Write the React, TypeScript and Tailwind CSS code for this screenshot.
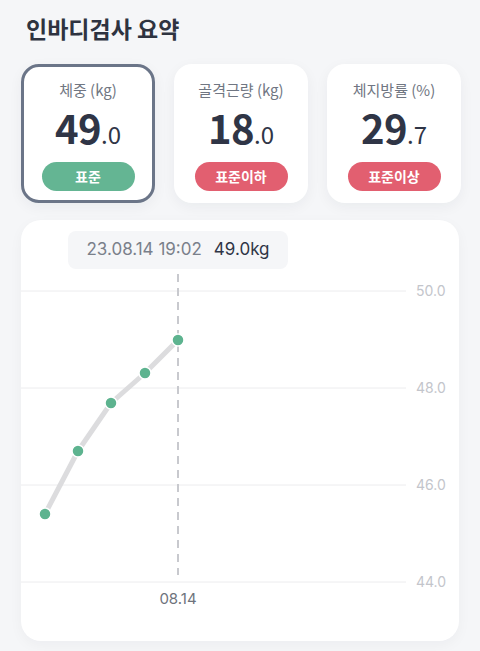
import React from "react";

const font = {
  fontFamily: '"Noto Sans CJK KR", "Noto Sans", sans-serif',
};

const latin = '"Inter", "Noto Sans", sans-serif';

type Stat = {
  label: string;
  whole: string;
  dec: string;
  badge: string;
  tone: "green" | "red";
  active?: boolean;
};

const stats: Stat[] = [
  { label: "체중 (kg)", whole: "49", dec: ".0", badge: "표준", tone: "green", active: true },
  { label: "골격근량 (kg)", whole: "18", dec: ".0", badge: "표준이하", tone: "red" },
  { label: "체지방률 (%)", whole: "29", dec: ".7", badge: "표준이상", tone: "red" },
];

const StatCard = ({ s }: { s: Stat }) => (
  <div
    className={
      "flex h-[139px] flex-col items-center rounded-[18px] bg-white shadow-[0_4px_14px_rgba(20,30,50,0.05)] " +
      (s.active ? "border-[3px] border-[#6b7588] pt-[13px]" : "pt-[16px]")
    }
  >
    <p className="text-[15px] leading-[20px] text-[#707682]">{s.label}</p>
    <p className="mt-[5px] flex items-baseline leading-[44px] text-[#2f3546]">
      <span className="text-[40px] font-semibold tracking-[-0.5px]">{s.whole}</span>
      <span className="text-[24px] font-normal">{s.dec}</span>
    </p>
    <div
      className={
        "mt-[6px] flex h-[29px] w-[93px] items-center justify-center rounded-full text-[14px] font-bold text-white " +
        (s.tone === "green" ? "bg-[#64b593]" : "bg-[#e25f70]")
      }
    >
      {s.badge}
    </div>
  </div>
);

const grid = [
  { y: 71, label: "50.0" },
  { y: 168, label: "48.0" },
  { y: 265, label: "46.0" },
  { y: 362, label: "44.0" },
];

const points = [
  [24, 294],
  [57, 231],
  [90, 183],
  [124, 153],
  [157, 120],
];

const Chart = () => (
  <div className="relative h-[421px] w-[438px] rounded-[20px] bg-white shadow-[0_4px_14px_rgba(20,30,50,0.04)]">
    <svg width="438" height="421" className="absolute left-0 top-0">
      {grid.map((g) => (
        <g key={g.label}>
          <line x1="0" x2="385" y1={g.y} y2={g.y} stroke="#ececee" strokeWidth="1" />
          <text x="395" y={g.y + 5} fontSize="14" fill="#c3c5cb" fontFamily={latin}>
            {g.label}
          </text>
        </g>
      ))}
      <line
        x1="157"
        x2="157"
        y1="54"
        y2="355"
        stroke="#c8c9ce"
        strokeWidth="2"
        strokeDasharray="8 6"
      />
      <polyline
        points={points.map((p) => p.join(",")).join(" ")}
        fill="none"
        stroke="#dcdcde"
        strokeWidth="5"
        strokeLinecap="round"
        strokeLinejoin="round"
      />
      {points.map(([x, y]) => (
        <circle key={x} cx={x} cy={y} r="6" fill="#5db38f" stroke="#ffffff" strokeWidth="1.5" />
      ))}
      <text x="157" y="384" textAnchor="middle" fontSize="15" fill="#6e737c" fontFamily={latin}>
        08.14
      </text>
    </svg>
    <div
      className="absolute left-[47px] top-[11px] flex h-[38px] w-[220px] items-center justify-center gap-[12px] rounded-[8px] bg-[#f5f6f8] text-[17px]"
      style={{ fontFamily: latin }}
    >
      <span className="text-[#7a808a]">23.08.14 19:02</span>
      <span className="text-[#2f3546]">49.0kg</span>
    </div>
  </div>
);

export default function App() {
  return (
    <div className="h-[651px] w-[480px] bg-[#f5f6f8] pl-[21px] pt-[12px]" style={font}>
      <h1 className="pl-[5px] text-[23px] font-bold leading-[32px] text-[#2e3340]">인바디검사 요약</h1>
      <div className="mt-[20px] grid w-[440px] grid-cols-3 gap-[19px]">
        {stats.map((s) => (
          <StatCard key={s.label} s={s} />
        ))}
      </div>
      <div className="mt-[17px]">
        <Chart />
      </div>
    </div>
  );
}
